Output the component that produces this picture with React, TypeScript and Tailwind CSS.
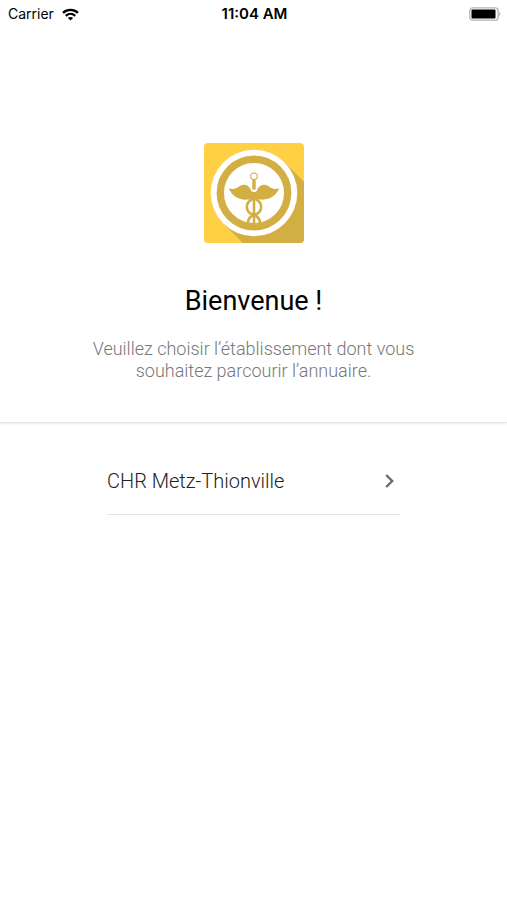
const establishments = [{ id: 'chr-metz-thionville', name: 'CHR Metz-Thionville' }]

function WifiIcon() {
  return (
    <svg width="17" height="13" viewBox="0 0 17 13" fill="none" stroke="#000" strokeWidth="2.3" aria-hidden="true">
      <path d="M1 4.8C5.2 .8 11.8 .8 16 4.8" />
      <path d="M3.8 7.8C6.5 5.3 10.5 5.3 13.2 7.8" />
      <path d="M8.5 12.6L5.9 9.9C7.4 8.6 9.6 8.6 11.1 9.9Z" fill="#000" stroke="none" />
    </svg>
  )
}

function BatteryIcon() {
  return (
    <svg width="32" height="14" viewBox="0 0 32 14" aria-hidden="true">
      <rect x=".8" y=".8" width="28.4" height="12.4" rx="3" fill="#fff" stroke="#b5b5b5" strokeWidth="1.3" />
      <rect x="2.5" y="2.5" width="24" height="9" rx="1" fill="#000" />
      <path d="M30.4 5v4c1.3-.6 1.3-3.4 0-4Z" fill="#999" />
    </svg>
  )
}

function ChevronIcon() {
  return (
    <svg width="9" height="14" viewBox="0 0 9 14" fill="none" stroke="#6b6b6b" strokeWidth="2.4" aria-hidden="true">
      <path d="M1.2 1L7.2 7L1.2 13" />
    </svg>
  )
}

function Logo() {
  return (
    <svg width="100" height="100" viewBox="0 0 100 100" role="img" aria-label="Annuaire">
      <defs>
        <clipPath id="logo-tile">
          <rect width="100" height="100" rx="4" />
        </clipPath>
        <clipPath id="logo-disc">
          <circle cx="50" cy="50" r="31" />
        </clipPath>
      </defs>
      <g clipPath="url(#logo-tile)">
        <rect width="100" height="100" fill="#ffd044" />
        {/* long shadow */}
        <path d="M80.6 19.4L100 38.8V100H38.8L19.4 80.6Z" fill="#d3af43" />
      </g>
      <circle cx="50" cy="50" r="43.3" fill="#fff" />
      <circle cx="50" cy="50" r="33.7" fill="none" stroke="#d3af43" strokeWidth="7.4" />
      {/* caduceus */}
      <g clipPath="url(#logo-disc)">
        <g fill="none" stroke="#d3af43" strokeWidth="2.6">
          <path d="M48 56.5C41 59.5 41 69 49 71.6C55 73.6 57 77 55.6 83" />
          <path d="M52 56.5C59 59.5 59 69 51 71.6C45 73.6 43 77 44.4 83" />
        </g>
        <path d="M48.7 57H51.3V81H48.7Z" fill="#d3af43" />
      </g>
      <path
        d="M24.7 45.5C29 46.5 32.2 45.8 35 43.6C39 40.5 44 41.5 46.5 46C47 48 48.2 49 50 49C51.8 49 53 48 53.5 46C56 41.5 61 40.5 65 43.6C67.8 45.8 71 46.5 75.3 45.3C72.5 52 66 57.2 57 56.6C54.5 56.5 53 57 50 57.5C47 57 45.5 56.5 43 56.6C34 57.2 27.5 52 24.7 45.5Z"
        fill="#d3af43"
      />
      <rect x="46.9" y="36" width="6.2" height="12.5" rx="2" fill="#fff" />
      <path d="M48.3 37H51.7V46.6H48.3Z" fill="#d3af43" />
      <circle cx="50" cy="33.3" r="3.3" fill="#fff" stroke="#d3af43" strokeWidth="1.1" />
    </svg>
  )
}

export default function App() {
  return (
    <div className="min-h-screen bg-white font-[Roboto,sans-serif] text-black">
      <div className="grid h-7 grid-cols-3 items-center pr-1.5 pl-2 font-[Inter,sans-serif] text-sm">
        <div className="flex items-center gap-2">
          <span>Carrier</span>
          <WifiIcon />
        </div>
        <time className="text-center text-[15px] font-semibold">11:04 AM</time>
        <div className="flex justify-end">
          <BatteryIcon />
        </div>
      </div>

      <header className="flex flex-col items-center border-b border-[#e6e6e6] px-20 pt-[115px] pb-10 text-center shadow-[0_1px_2px_rgba(0,0,0,0.08)]">
        <Logo />
        <h1 className="mt-10 text-[27px] leading-9">Bienvenue !</h1>
        <p className="mt-[19px] max-w-[340px] text-lg leading-[22px] font-light text-[#777]">
          Veuillez choisir l’établissement dont vous souhaitez parcourir l’annuaire.
        </p>
      </header>

      <main className="px-[107px] pt-6">
        <ul>
          {establishments.map((item) => (
            <li key={item.id} className="border-b border-[#e5e5e5]">
              <button type="button" className="flex h-[67px] w-full items-center justify-between pr-1.5 text-left text-xl font-light text-[#222]">
                <span>{item.name}</span>
                <ChevronIcon />
              </button>
            </li>
          ))}
        </ul>
      </main>
    </div>
  )
}
